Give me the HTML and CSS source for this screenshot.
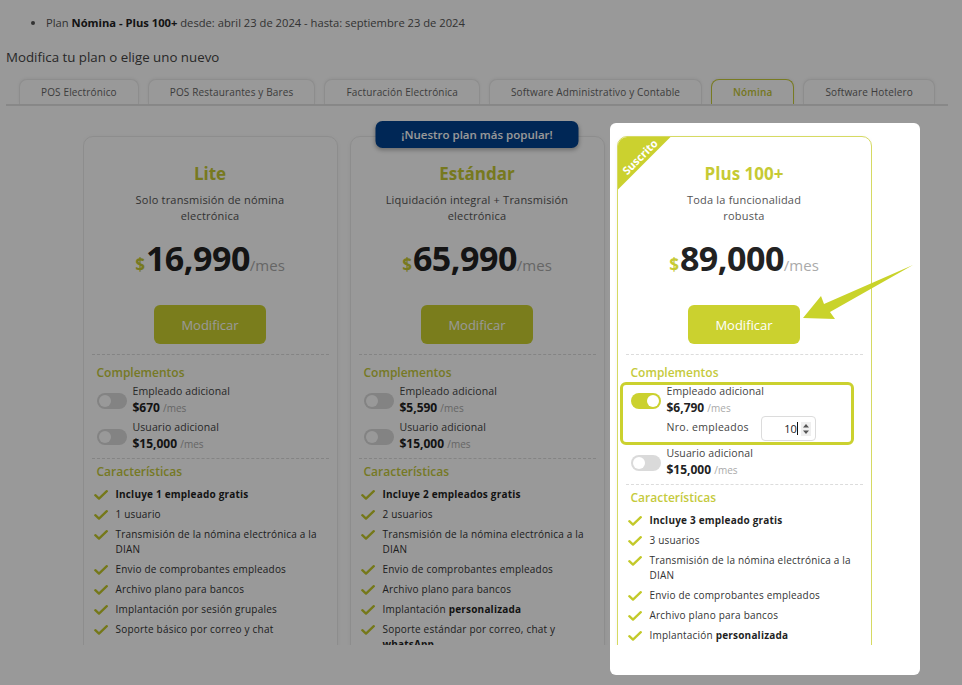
FILE: index.html
```html
<!DOCTYPE html>
<html lang="es">
<head>
<meta charset="utf-8">
<title>Modifica tu plan</title>
<link rel="stylesheet" href="styles.css">
</head>
<body>
<div class="page">
  <ul class="current">
    <li>Plan <b>Nómina - Plus 100+</b> desde: abril 23 de 2024 - hasta: septiembre 23 de 2024</li>
  </ul>
  <h2 class="title">Modifica tu plan o elige uno nuevo</h2>
  <nav class="tabs">
    <span class="tab">POS Electrónico</span>
    <span class="tab">POS Restaurantes y Bares</span>
    <span class="tab">Facturación Electrónica</span>
    <span class="tab">Software Administrativo y Contable</span>
    <span class="tab tab--active">Nómina</span>
    <span class="tab">Software Hotelero</span>
  </nav>

  <div class="plans">
    <!-- Lite -->
    <article class="card">
      <div class="card-head">
        <h3 class="plan-name">Lite</h3>
        <p class="plan-desc">Solo transmisión de nómina electrónica</p>
        <div class="price"><span class="cur">$</span><span class="amount">16,990</span><span class="per">/mes</span></div>
        <button class="btn">Modificar</button>
      </div>
      <section class="block">
        <h4 class="block-title">Complementos</h4>
        <div class="addons">
          <div class="addon">
            <span class="toggle"></span>
            <div class="addon-info">
              <div class="addon-name">Empleado adicional</div>
              <div class="addon-price"><b>$670</b> <span>/mes</span></div>
            </div>
          </div>
          <div class="addon">
            <span class="toggle"></span>
            <div class="addon-info">
              <div class="addon-name">Usuario adicional</div>
              <div class="addon-price"><b>$15,000</b> <span>/mes</span></div>
            </div>
          </div>
        </div>
      </section>
      <section class="block">
        <h4 class="block-title">Características</h4>
        <ul class="features">
          <li><svg class="check" viewBox="0 0 14 10"><path d="M1.3 5.2 L5 8.6 L12.8 1.2"/></svg><span><b>Incluye 1 empleado gratis</b></span></li>
          <li><svg class="check" viewBox="0 0 14 10"><path d="M1.3 5.2 L5 8.6 L12.8 1.2"/></svg><span>1 usuario</span></li>
          <li><svg class="check" viewBox="0 0 14 10"><path d="M1.3 5.2 L5 8.6 L12.8 1.2"/></svg><span>Transmisión de la nómina electrónica a la DIAN</span></li>
          <li><svg class="check" viewBox="0 0 14 10"><path d="M1.3 5.2 L5 8.6 L12.8 1.2"/></svg><span>Envio de comprobantes empleados</span></li>
          <li><svg class="check" viewBox="0 0 14 10"><path d="M1.3 5.2 L5 8.6 L12.8 1.2"/></svg><span>Archivo plano para bancos</span></li>
          <li><svg class="check" viewBox="0 0 14 10"><path d="M1.3 5.2 L5 8.6 L12.8 1.2"/></svg><span>Implantación por sesión grupales</span></li>
          <li><svg class="check" viewBox="0 0 14 10"><path d="M1.3 5.2 L5 8.6 L12.8 1.2"/></svg><span>Soporte básico por correo y chat</span></li>
        </ul>
      </section>
    </article>

    <!-- Estándar -->
    <article class="card">
      <div class="popular">¡Nuestro plan más popular!</div>
      <div class="card-head">
        <h3 class="plan-name">Estándar</h3>
        <p class="plan-desc">Liquidación integral + Transmisión electrónica</p>
        <div class="price"><span class="cur">$</span><span class="amount">65,990</span><span class="per">/mes</span></div>
        <button class="btn">Modificar</button>
      </div>
      <section class="block">
        <h4 class="block-title">Complementos</h4>
        <div class="addons">
          <div class="addon">
            <span class="toggle"></span>
            <div class="addon-info">
              <div class="addon-name">Empleado adicional</div>
              <div class="addon-price"><b>$5,590</b> <span>/mes</span></div>
            </div>
          </div>
          <div class="addon">
            <span class="toggle"></span>
            <div class="addon-info">
              <div class="addon-name">Usuario adicional</div>
              <div class="addon-price"><b>$15,000</b> <span>/mes</span></div>
            </div>
          </div>
        </div>
      </section>
      <section class="block">
        <h4 class="block-title">Características</h4>
        <ul class="features">
          <li><svg class="check" viewBox="0 0 14 10"><path d="M1.3 5.2 L5 8.6 L12.8 1.2"/></svg><span><b>Incluye 2 empleados gratis</b></span></li>
          <li><svg class="check" viewBox="0 0 14 10"><path d="M1.3 5.2 L5 8.6 L12.8 1.2"/></svg><span>2 usuarios</span></li>
          <li><svg class="check" viewBox="0 0 14 10"><path d="M1.3 5.2 L5 8.6 L12.8 1.2"/></svg><span>Transmisión de la nómina electrónica a la DIAN</span></li>
          <li><svg class="check" viewBox="0 0 14 10"><path d="M1.3 5.2 L5 8.6 L12.8 1.2"/></svg><span>Envio de comprobantes empleados</span></li>
          <li><svg class="check" viewBox="0 0 14 10"><path d="M1.3 5.2 L5 8.6 L12.8 1.2"/></svg><span>Archivo plano para bancos</span></li>
          <li><svg class="check" viewBox="0 0 14 10"><path d="M1.3 5.2 L5 8.6 L12.8 1.2"/></svg><span>Implantación <b>personalizada</b></span></li>
          <li><svg class="check" viewBox="0 0 14 10"><path d="M1.3 5.2 L5 8.6 L12.8 1.2"/></svg><span>Soporte estándar por correo, chat y <b>whatsApp</b></span></li>
        </ul>
      </section>
    </article>

    <!-- Plus 100+ -->
    <article class="card card--current">
      <div class="ribbon"><span>Suscrito</span></div>
      <div class="card-head">
        <h3 class="plan-name">Plus 100+</h3>
        <p class="plan-desc">Toda la funcionalidad<br>robusta</p>
        <div class="price"><span class="cur">$</span><span class="amount">89,000</span><span class="per">/mes</span></div>
        <button class="btn">Modificar</button>
      </div>
      <section class="block">
        <h4 class="block-title">Complementos</h4>
        <div class="addons">
          <div class="addon-group addon-group--focus">
            <div class="addon">
              <span class="toggle toggle--on"></span>
              <div class="addon-info">
                <div class="addon-name">Empleado adicional</div>
                <div class="addon-price"><b>$6,790</b> <span>/mes</span></div>
              </div>
            </div>
            <div class="qty-row">
              <span class="qty-label">Nro. empleados</span>
              <div class="qty">
                <span class="qty-value">10</span><span class="caret"></span>
                <svg class="spin" viewBox="0 0 10 14"><path d="M2 5.5 L5 2 L8 5.5 Z M2 8.5 L5 12 L8 8.5 Z"/></svg>
              </div>
            </div>
          </div>
          <div class="addon">
            <span class="toggle"></span>
            <div class="addon-info">
              <div class="addon-name">Usuario adicional</div>
              <div class="addon-price"><b>$15,000</b> <span>/mes</span></div>
            </div>
          </div>
        </div>
      </section>
      <section class="block">
        <h4 class="block-title">Características</h4>
        <ul class="features">
          <li><svg class="check" viewBox="0 0 14 10"><path d="M1.3 5.2 L5 8.6 L12.8 1.2"/></svg><span><b>Incluye 3 empleado gratis</b></span></li>
          <li><svg class="check" viewBox="0 0 14 10"><path d="M1.3 5.2 L5 8.6 L12.8 1.2"/></svg><span>3 usuarios</span></li>
          <li><svg class="check" viewBox="0 0 14 10"><path d="M1.3 5.2 L5 8.6 L12.8 1.2"/></svg><span>Transmisión de la nómina electrónica a la DIAN</span></li>
          <li><svg class="check" viewBox="0 0 14 10"><path d="M1.3 5.2 L5 8.6 L12.8 1.2"/></svg><span>Envio de comprobantes empleados</span></li>
          <li><svg class="check" viewBox="0 0 14 10"><path d="M1.3 5.2 L5 8.6 L12.8 1.2"/></svg><span>Archivo plano para bancos</span></li>
          <li><svg class="check" viewBox="0 0 14 10"><path d="M1.3 5.2 L5 8.6 L12.8 1.2"/></svg><span>Implantación <b>personalizada</b></span></li>
          <li><svg class="check" viewBox="0 0 14 10"><path d="M1.3 5.2 L5 8.6 L12.8 1.2"/></svg><span>Soporte premium por correo, chat y <b>whatsApp</b></span></li>
        </ul>
      </section>
    </article>
  </div>
</div>

<div class="tour-hole"></div>
<svg class="tour-arrow" viewBox="0 0 125 66">
  <polygon points="8,60 26,38 29,46 118,7 35,54 40,61"/>
</svg>
</body>
</html>
```

FILE: styles.css
```css
html, body {
  margin: 0;
  background: #ffffff;
}
body {
  font-family: "Open Sans", "Liberation Sans", sans-serif;
  color: #444;
  width: 962px;
  height: 685px;
  overflow: hidden;
  position: relative;
}

.page {
  padding: 0 14px 0 6px;
}

/* current subscription line */
.current {
  margin: 0;
  padding: 15px 0 0 40px;
  font-size: 11.2px;
  line-height: 16px;
  color: #555;
}
.current b {
  color: #222;
  font-weight: 700;
}

.title {
  margin: 16px 0 0;
  font-size: 13.3px;
  line-height: 20px;
  font-weight: 400;
  color: #444;
}

/* tabs */
.tabs {
  display: flex;
  gap: 9px;
  margin-top: 12px;
  padding-left: 13px;
  border-bottom: 2px solid #e3e3e3;
}
.tab {
  height: 24px;
  line-height: 24px;
  padding: 0 21px;
  font-size: 10px;
  letter-spacing: 0.15px;
  color: #666;
  background: #fff;
  border: 1px solid #ececec;
  border-bottom: none;
  border-radius: 8px 8px 0 0;
  box-shadow: 0 -1px 3px rgba(0, 0, 0, 0.05);
  white-space: nowrap;
}
.tab--active {
  border-color: #c9cd3a;
  color: #c3c634;
  font-weight: 600;
}

/* plans */
.plans {
  width: 789px;
  height: 509px;
  margin: 15px auto 0;
  padding-top: 15px;
  display: grid;
  grid-template-columns: repeat(3, 255px);
  column-gap: 12px;
  overflow: hidden;
  align-items: start;
}

.card {
  position: relative;
  background: #fff;
  border: 1px solid #ececec;
  border-radius: 10px;
  box-shadow: 0 1px 4px rgba(0, 0, 0, 0.05);
  padding-bottom: 20px;
}
.card--current {
  border-color: #d6da62;
  overflow: hidden;
}

.popular {
  position: absolute;
  top: -16px;
  left: 50%;
  transform: translateX(-50%);
  width: 203px;
  height: 27px;
  line-height: 27px;
  text-align: center;
  background: #00418f;
  color: #fff;
  font-size: 11.5px;
  font-weight: 600;
  border-radius: 7px;
  box-shadow: 0 2px 4px rgba(0, 0, 0, 0.3);
  white-space: nowrap;
}

.ribbon {
  position: absolute;
  top: 0;
  left: 0;
  width: 53px;
  height: 53px;
  background: #cbd12f;
  clip-path: polygon(0 0, 100% 0, 0 100%);
}
.ribbon span {
  position: absolute;
  left: 22px;
  top: 20px;
  transform: translate(-50%, -50%) rotate(-45deg);
  color: #fff;
  font-size: 11px;
  font-weight: 700;
  line-height: 12px;
  white-space: nowrap;
}

.card-head {
  padding-top: 26px;
  display: flex;
  flex-direction: column;
  align-items: center;
  text-align: center;
}
.plan-name {
  margin: 0;
  font-size: 17px;
  line-height: 22px;
  font-weight: 700;
  color: #c6ca34;
}
.plan-desc {
  margin: 7px 0 0;
  padding: 0 30px;
  font-size: 11px;
  line-height: 16px;
  color: #555;
  letter-spacing: 0.2px;
}
.price {
  margin-top: 14px;
  height: 40px;
  display: flex;
  align-items: baseline;
  justify-content: center;
  line-height: 40px;
}
.cur {
  font-size: 17px;
  font-weight: 700;
  color: #c6ca34;
  margin-right: 1px;
}
.amount {
  font-size: 34px;
  font-weight: 700;
  color: #222;
  letter-spacing: -0.5px;
}
.per {
  font-size: 15px;
  color: #aaa;
}
.btn {
  margin-top: 27px;
  width: 112px;
  height: 39px;
  border: none;
  border-radius: 6px;
  background: #cbd12f;
  color: #fff;
  font-family: inherit;
  font-size: 13px;
  padding: 0;
}

/* sections */
.block {
  margin: 10px 8px 0;
  padding: 0 5px;
  border-top: 1px dashed #dcdcdc;
}
.block + .block {
  margin-top: 5px;
}
.block-title {
  margin: 10px 0 0;
  font-size: 12px;
  line-height: 16px;
  font-weight: 600;
  color: #c5ca3c;
}
.block + .block .block-title {
  margin-top: 5px;
}

.addons {
  margin-top: 3px;
  display: flex;
  flex-direction: column;
  gap: 3px;
}
.addon {
  display: flex;
  align-items: center;
  gap: 6px;
}
.addon-group {
  position: relative;
  display: flex;
  flex-direction: column;
  margin-bottom: 2px;
}
.addon-group--focus::after {
  content: "";
  position: absolute;
  left: -11px;
  right: 4px;
  top: -2px;
  bottom: -4px;
  border: 3px solid #cbd12f;
  border-radius: 6px;
  pointer-events: none;
}
.toggle {
  position: relative;
  flex: none;
  width: 30px;
  height: 16px;
  border-radius: 8px;
  background: #dadada;
}
.toggle::after {
  content: "";
  position: absolute;
  top: 2px;
  left: 2px;
  width: 12px;
  height: 12px;
  border-radius: 50%;
  background: #fff;
}
.toggle--on {
  background: #cbd12f;
}
.toggle--on::after {
  left: 16px;
}
.addon-name {
  font-size: 10.5px;
  line-height: 15px;
  color: #444;
  letter-spacing: 0.1px;
}
.addon-price {
  font-size: 12px;
  line-height: 18px;
}
.addon-price b {
  color: #222;
  font-weight: 700;
}
.addon-price span {
  font-size: 10px;
  color: #aaa;
}

.qty-row {
  display: flex;
  align-items: center;
  gap: 12px;
  margin-top: -1px;
  padding-left: 36px;
  height: 25px;
}
.qty-label {
  font-size: 10.5px;
  line-height: 14px;
  margin-top: -3px;
  color: #444;
  letter-spacing: 0.3px;
}
.qty {
  position: relative;
  width: 55px;
  height: 25px;
  box-sizing: border-box;
  border: 1px solid #dcdcdc;
  border-radius: 4px;
  display: flex;
  align-items: center;
  justify-content: flex-end;
  padding-right: 17px;
  font-size: 11px;
  color: #222;
}
.caret {
  display: inline-block;
  width: 1px;
  height: 13px;
  background: #111;
}
.spin {
  position: absolute;
  right: 4px;
  top: 5px;
  width: 10px;
  height: 14px;
  background: #efefef;
  fill: #555;
}

.features {
  list-style: none;
  margin: 7px 0 0 -3px;
  padding: 0;
  display: flex;
  flex-direction: column;
  gap: 5px;
}
.features li {
  display: flex;
  align-items: flex-start;
  gap: 8px;
  font-size: 10px;
  line-height: 15px;
  color: #333;
  letter-spacing: 0.2px;
}
.features b {
  color: #1f1f1f;
  font-weight: 700;
}
.check {
  flex: none;
  width: 14px;
  height: 10px;
  margin-top: 3px;
  fill: none;
  stroke: #c3c92a;
  stroke-width: 2.3;
  stroke-linecap: round;
  stroke-linejoin: round;
}

/* guided-tour overlay */
.tour-hole {
  position: absolute;
  left: 610px;
  top: 123px;
  width: 310px;
  height: 552px;
  border-radius: 6px;
  box-shadow: 0 0 0 2000px rgba(0, 0, 0, 0.4);
  pointer-events: none;
}
.tour-arrow {
  position: absolute;
  left: 795px;
  top: 258px;
  width: 125px;
  height: 66px;
  fill: #c9d32a;
}
```
